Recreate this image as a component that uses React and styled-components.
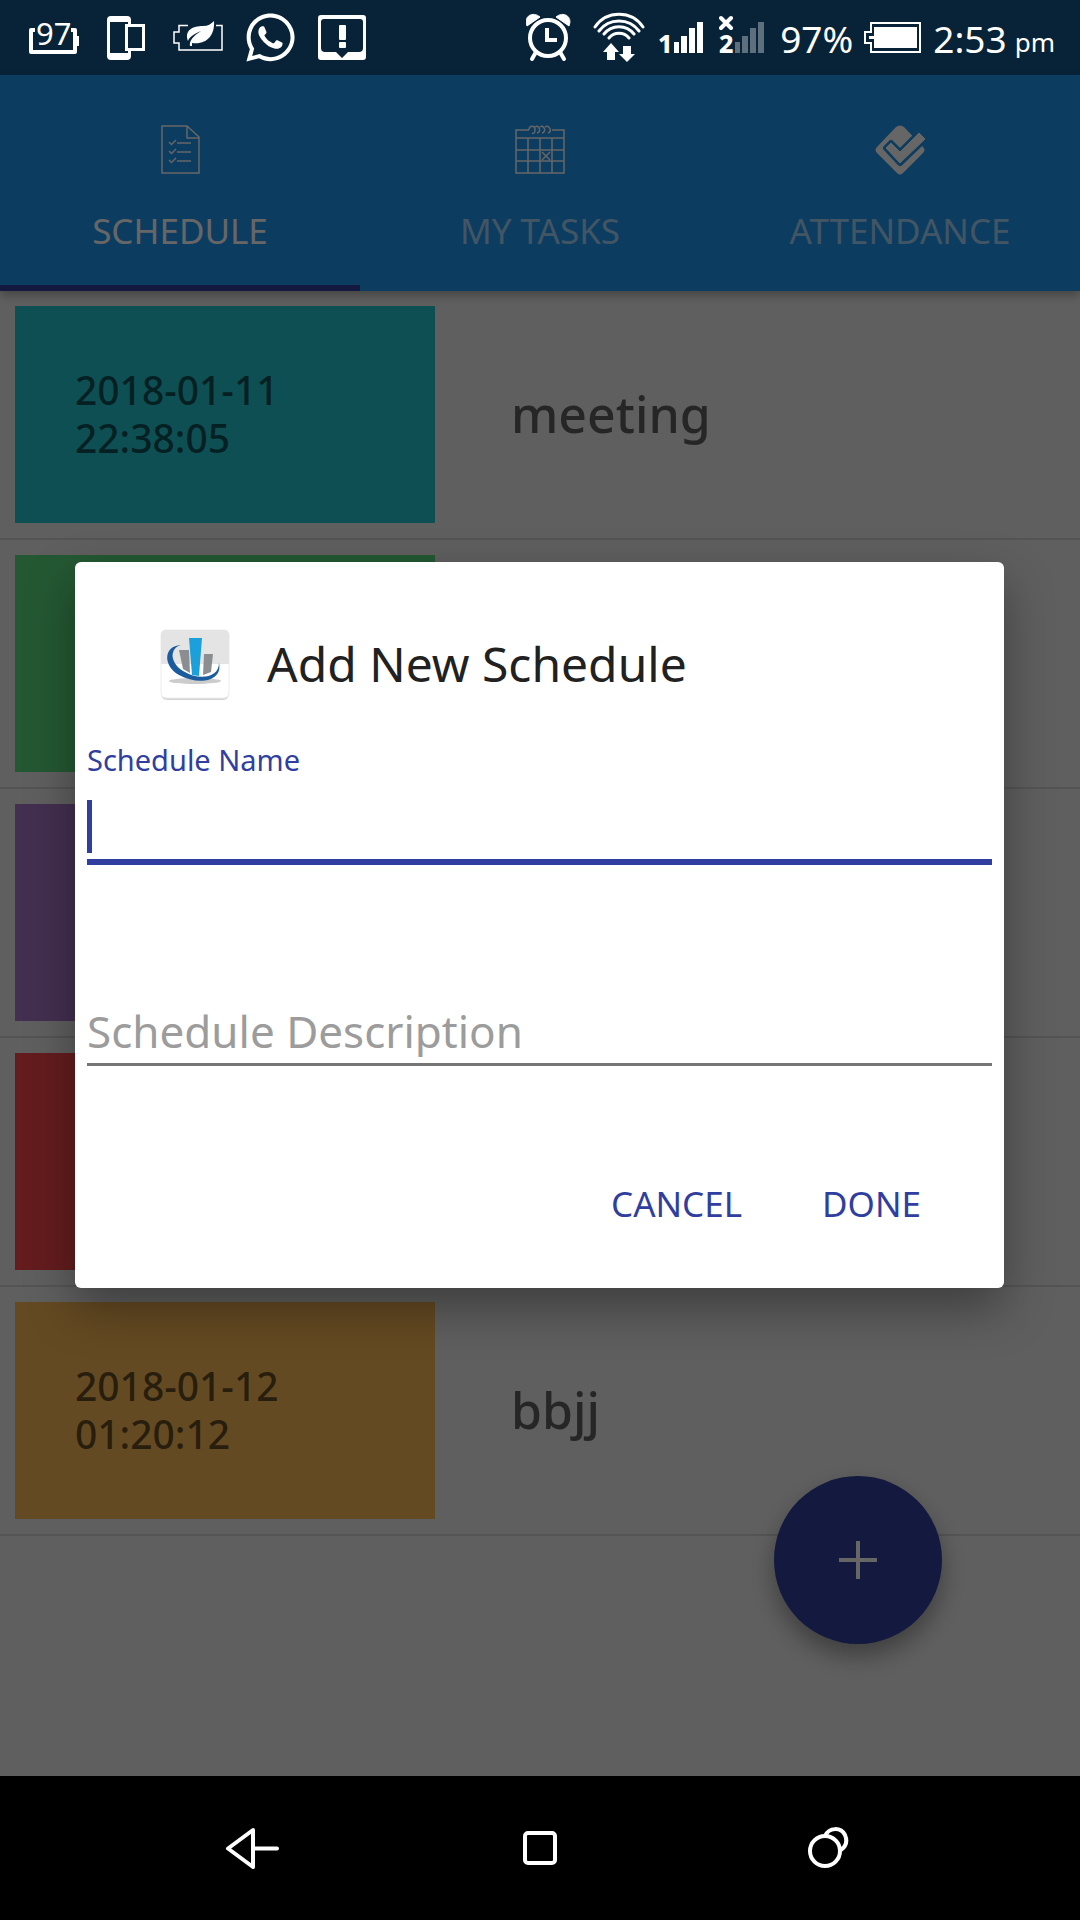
import React, { useState } from 'react';
import styled, { createGlobalStyle } from 'styled-components';
import { FaWhatsapp } from 'react-icons/fa';

const GlobalStyle = createGlobalStyle`
  * {
    box-sizing: border-box;
  }
  body {
    margin: 0;
    background: #000;
    font-family: 'Noto Sans', 'Open Sans', sans-serif;
  }
  button,
  input {
    font-family: inherit;
  }
`;

const Screen = styled.div`
  min-height: 100vh;
  display: flex;
  flex-direction: column;
`;

const StatusBar = styled.header`
  height: 75px;
  display: flex;
  justify-content: space-between;
  padding: 0 25px 0 18px;
  background: #082338;
  color: #fff;
`;

const Notifications = styled.div`
  display: flex;
  align-items: center;
`;

const Notification = styled.span`
  width: 72px;
  display: flex;
  justify-content: center;
`;

const SystemInfo = styled.div`
  display: flex;
  gap: 11px;
`;

const Clock = styled.div`
  display: flex;
  gap: 8px;
`;

const StatusText = styled.span`
  font-size: ${(props) => (props.$small ? '26px' : '37px')};
  line-height: ${(props) => (props.$small ? '84px' : '78px')};
`;

const Content = styled.main`
  position: relative;
  flex: 1;
  display: flex;
  flex-direction: column;
  background: #eee;
`;

const TabBar = styled.nav`
  display: grid;
  grid-template-columns: repeat(3, 1fr);
  height: 216px;
  background: #1e96f0;
  box-shadow: 0 4px 10px rgba(0, 0, 0, 0.3);
`;

const Tab = styled.button`
  display: flex;
  flex-direction: column;
  align-items: center;
  gap: 27px;
  padding: 45px 0 0;
  border: none;
  border-bottom: 6px solid ${(props) => (props.$active ? '#303f9f' : 'transparent')};
  background: none;
  color: #fff;
`;

const TabLabel = styled.span`
  font-size: 35px;
  line-height: 48px;
  opacity: ${(props) => (props.$active ? 1 : 0.6)};
`;

const List = styled.ul`
  margin: 0;
  padding: 0;
  list-style: none;
`;

const Row = styled.li`
  display: flex;
  align-items: center;
  padding: 15px;
  border-bottom: 2px solid #d2d2d2;
`;

const DateCard = styled.div`
  width: 40%;
  height: 217px;
  display: flex;
  flex-direction: column;
  justify-content: center;
  padding: 0 0 2px 60px;
  background: ${(props) => props.$color};
  color: rgba(0, 0, 0, 0.6);
  font-size: 39px;
  font-weight: 500;
  line-height: 48px;
`;

const RowTitle = styled.span`
  padding: 0 0 2px 76px;
  color: rgba(0, 0, 0, 0.6);
  font-size: 50px;
  font-weight: 500;
`;

const AddButton = styled.button`
  position: absolute;
  right: 138px;
  bottom: 132px;
  width: 168px;
  height: 168px;
  display: flex;
  align-items: center;
  justify-content: center;
  padding: 0;
  border: none;
  border-radius: 50%;
  background: #303f9f;
  color: #fff;
  box-shadow: 0 12px 24px rgba(0, 0, 0, 0.35);
`;

const Overlay = styled.div`
  position: absolute;
  inset: 0;
  display: flex;
  align-items: center;
  justify-content: center;
  padding: 0 76px 1px 75px;
  background: rgba(0, 0, 0, 0.6);
`;

const Dialog = styled.form`
  width: 100%;
  padding: 66px 12px 36px;
  border-radius: 6px;
  background: #fff;
  box-shadow: 0 20px 48px rgba(0, 0, 0, 0.35);
`;

const DialogHeader = styled.div`
  display: flex;
  align-items: center;
  gap: 36px;
  padding-left: 72px;
  margin-bottom: 40px;
`;

const DialogTitle = styled.h1`
  margin: 0;
  color: #212121;
  font-size: 48px;
  font-weight: 400;
  line-height: 70px;
`;

const FieldLabel = styled.label`
  display: block;
  color: #303f9f;
  font-size: 29px;
  line-height: 40px;
`;

const InputLine = styled.div`
  height: ${(props) => (props.$focused ? '85px' : '82px')};
  display: flex;
  align-items: flex-end;
  padding-bottom: 6px;
  border-bottom: ${(props) => (props.$focused ? '6px solid #303f9f' : '3px solid #757575')};
`;

const Caret = styled.span`
  width: 5px;
  height: 53px;
  background: #303f9f;
`;

const Input = styled.input`
  flex: 1;
  min-width: 0;
  height: 53px;
  padding: 0;
  border: none;
  outline: none;
  background: none;
  color: #212121;
  font-size: 44px;
  &::placeholder {
    color: #9c9c9c;
    opacity: 1;
  }
`;

const Field = styled.div`
  margin-bottom: ${(props) => (props.$last ? '89px' : '119px')};
`;

const Actions = styled.div`
  display: flex;
  justify-content: flex-end;
  gap: 34px;
  padding: 0 48px 1px 0;
`;

const ActionButton = styled.button`
  height: 96px;
  padding: 0 23px;
  border: none;
  background: none;
  color: #303f9f;
  font-size: 35px;
`;

const NavBar = styled.footer`
  display: grid;
  grid-template-columns: repeat(3, 1fr);
  height: 144px;
  padding: 0 10%;
  background: #000;
`;

const NavButton = styled.button`
  display: flex;
  align-items: center;
  justify-content: center;
  padding: 0;
  border: none;
  background: none;
  color: #fff;
`;

const BatteryLevelIcon = () => (
  <svg width="50" height="75" viewBox="0 0 50 75" fill="none" stroke="currentColor">
    <path d="M6 30H2V52H46V30H42" strokeWidth="4" strokeLinejoin="round" />
    <path d="M48 36V46" strokeWidth="4" />
    <text x="7" y="45" fontSize="31" fill="currentColor" stroke="none">97</text>
  </svg>
);

const DevicesIcon = () => (
  <svg width="38" height="75" viewBox="0 0 38 75" fill="currentColor">
    <path fillRule="evenodd" d="M4 16H20Q24 16 24 20V24H38V51H24V56Q24 60 20 60H4Q0 60 0 56V20Q0 16 4 16ZM3 22V53H21V51H18V24H21V22ZM21 27V48H35V27Z" />
  </svg>
);

const BatterySaverIcon = () => (
  <svg width="50" height="75" viewBox="0 0 50 75">
    <path d="M15 25.500H6V32H1V43H6V50H49V25.500H43" fill="none" stroke="currentColor" strokeWidth="1.500" />
    <path d="M41 21C42 35 34 45 19 43L19 46L17 46C16 41 20 36 28 31C20 34 16 38 15 41C11 30 20 26 30 26C35 26 38 24 41 21Z" fill="currentColor" />
  </svg>
);

const AlertIcon = () => (
  <svg width="48" height="75" viewBox="0 0 48 75" fill="currentColor">
    <path fillRule="evenodd" d="M3 15H45Q48 15 48 18V57Q48 60 45 60H3Q0 60 0 57V18Q0 15 3 15ZM6 19Q3 19 3 22V48Q3 52 7 52H18L24 58L30 52H41Q45 52 45 48V22Q45 19 42 19Z" />
    <rect x="21" y="25" width="7" height="15" rx="1" />
    <rect x="21" y="42" width="7" height="6" rx="1" />
  </svg>
);

const AlarmIcon = () => (
  <svg width="56" height="75" viewBox="0 0 56 75" fill="none" stroke="currentColor" strokeWidth="4">
    <circle cx="22" cy="38" r="18" />
    <path d="M21 28V40H31" />
    <path d="M10 52L6 59M34 52L38 59" strokeLinecap="round" />
    <path d="M1 26C-3 16 7 11 14 17ZM43 26C47 16 37 11 30 17Z" fill="currentColor" stroke="currentColor" strokeWidth="1" />
  </svg>
);

const WifiIcon = () => (
  <svg width="54" height="75" viewBox="0 0 54 75" fill="none" stroke="currentColor" strokeWidth="3" strokeLinecap="round">
    <path d="M2 27A29 29 0 0 1 50 27M6 31A25 25 0 0 1 46 31M11 34A19 19 0 0 1 41 34M16 38A13 13 0 0 1 36 38" />
    <path d="M18 43L26 52H22V60H14V52H10ZM34 62L42 54H38V46H30V54H26Z" fill="currentColor" stroke="none" />
  </svg>
);

const SignalIcon = ({ sim, off }) => (
  <svg width="50" height="75" viewBox="0 0 50 75" fill="currentColor">
    {off && <path d="M2 18L12 28M12 18L2 28" stroke="currentColor" strokeWidth="4" strokeLinecap="round" />}
    <text x="0" y="53" fontSize="25" fontWeight="800">{sim}</text>
    <path opacity={off ? 0.35 : 1} d="M16 42H21V53H16ZM23 36H29V53H23ZM31 28H37V53H31ZM39 22H45V53H39Z" />
  </svg>
);

const BatteryIcon = () => (
  <svg width="58" height="75" viewBox="0 0 58 75">
    <path d="M7 23H56V52H7V43H1V32H7Z" fill="none" stroke="currentColor" strokeWidth="2" />
    <path d="M10 27H53V48H10V39H5V36H10Z" fill="currentColor" />
  </svg>
);

const ScheduleIcon = () => (
  <svg width="60" height="60" viewBox="0 0 60 60" fill="none" stroke="currentColor" strokeWidth="1.500">
    <path d="M12 6H37L49 17V53H12ZM37 6V18H49" />
    <path d="M27 23H41M27 32H41M27 41H41" />
    <path d="M19 22L21.500 24.500L26 20M19 31L21.500 33.500L26 29M19 40L21.500 42.500L26 38" />
  </svg>
);

const TasksIcon = () => (
  <svg width="60" height="60" viewBox="0 0 60 60" fill="none" stroke="currentColor" strokeWidth="1.500">
    <path d="M19 10H6V53H54V10H42M6 18H54M6 30H54M6 41H54M18 18V53M30 18V53M42 18V53" />
    <path d="M32 32L40 40M40 32L32 40" />
    <path d="M19 10C19 5 25 5 25 10C25 13 23 14 22 13M25 7C29 4 32 12 27 13M30 7C34 4 37 12 32 13M35 7C39 4 43 12 38 13" />
  </svg>
);

const AttendanceIcon = () => (
  <svg width="60" height="60" viewBox="0 0 60 60" fill="currentColor">
    <path d="M26 7Q30 4 34 7L53 27Q56 30 53 33L33 53Q30 56 27 53L7 33Q4 30 7 27Z" />
    <path d="M16 28L21 23L30 32L49 13L55 19L30 43Z" stroke="#1e96f0" strokeWidth="6" strokeLinejoin="round" />
    <path d="M42 15L49 8L60 18L55 23Z" fill="#1e96f0" />
    <path d="M16 28L21 23L30 32L49 13L55 19L30 43Z" stroke="currentColor" strokeWidth="1" strokeLinejoin="round" />
  </svg>
);

const LogoIcon = () => (
  <svg width="72" height="72" viewBox="0 0 72 72">
    <rect x="2" y="3" width="68" height="69" rx="6" fill="#d4d4d4" />
    <rect x="2" y="2" width="68" height="68" rx="5" fill="#fff" stroke="#ececec" />
    <path d="M2 36V7Q2 2 7 2H65Q70 2 70 7V36Z" fill="#e4e4e4" />
    <ellipse cx="36" cy="53" rx="26" ry="3" fill="#ccc" />
    <path d="M20 22H30L31 45L24 41Z" fill="#8b8d90" />
    <path d="M45 26H54L52 44L44 47Z" fill="#8b8d90" />
    <path d="M30 10H43L40 48L33 47Z" fill="#1ba0dc" />
    <path d="M22 17C4 18 4 38 20 47C40 58 64 53 60 35C60 50 40 53 24 43C10 34 11 20 22 17Z" fill="#1b5c9e" />
  </svg>
);

const PlusIcon = () => (
  <svg width="40" height="40" viewBox="0 0 40 40" stroke="currentColor" strokeWidth="4">
    <path d="M20 1V39M1 20H39" />
  </svg>
);

const BackIcon = () => (
  <svg width="56" height="48" viewBox="0 0 56 48" fill="none" stroke="currentColor" strokeWidth="4" strokeLinecap="round" strokeLinejoin="round">
    <path d="M29 6L4 24.500L29 43ZM29 24.500H53" />
  </svg>
);

const HomeIcon = () => (
  <svg width="34" height="34" viewBox="0 0 34 34" fill="none" stroke="currentColor" strokeWidth="4">
    <rect x="2" y="2" width="30" height="30" rx="3" />
  </svg>
);

const RecentIcon = () => (
  <svg width="42" height="42" viewBox="0 0 42 42" fill="none" stroke="currentColor" strokeWidth="4">
    <circle cx="18" cy="24" r="15" />
    <path d="M18 9C22 0 34 0 38 8C41 15 38 20 34 23" />
  </svg>
);

const tabs = [
  { label: 'SCHEDULE', Icon: ScheduleIcon },
  { label: 'MY TASKS', Icon: TasksIcon },
  { label: 'ATTENDANCE', Icon: AttendanceIcon },
];

const schedules = [
  { color: '#24c6d2', date: '2018-01-11', time: '22:38:05', title: 'meeting' },
  { color: '#5adc80' },
  { color: '#a876c8' },
  { color: '#fa464b' },
  { color: '#fab955', date: '2018-01-12', time: '01:20:12', title: 'bbjj' },
];

const App = () => {
  const [activeTab, setActiveTab] = useState('SCHEDULE');
  const [name, setName] = useState('');
  const [description, setDescription] = useState('');

  const handleSubmit = (e) => {
    e.preventDefault();
    setName('');
    setDescription('');
  };

  return (
    <Screen>
      <GlobalStyle />
      <StatusBar>
        <Notifications>
          <Notification><BatteryLevelIcon /></Notification>
          <Notification><DevicesIcon /></Notification>
          <Notification><BatterySaverIcon /></Notification>
          <Notification><FaWhatsapp size={55} /></Notification>
          <Notification><AlertIcon /></Notification>
        </Notifications>
        <SystemInfo>
          <AlarmIcon />
          <WifiIcon />
          <SignalIcon sim="1" />
          <SignalIcon sim="2" off />
          <StatusText>97%</StatusText>
          <BatteryIcon />
          <Clock>
            <StatusText>2:53</StatusText>
            <StatusText $small>pm</StatusText>
          </Clock>
        </SystemInfo>
      </StatusBar>

      <Content>
        <TabBar>
          {tabs.map(({ label, Icon }) => (
            <Tab key={label} type="button" $active={label === activeTab} onClick={() => setActiveTab(label)}>
              <Icon />
              <TabLabel $active={label === activeTab}>{label}</TabLabel>
            </Tab>
          ))}
        </TabBar>
        <List>
          {schedules.map((item) => (
            <Row key={item.color}>
              <DateCard $color={item.color}>
                <span>{item.date}</span>
                <span>{item.time}</span>
              </DateCard>
              <RowTitle>{item.title}</RowTitle>
            </Row>
          ))}
        </List>
        <AddButton type="button" aria-label="Add">
          <PlusIcon />
        </AddButton>

        <Overlay>
          <Dialog onSubmit={handleSubmit}>
            <DialogHeader>
              <LogoIcon />
              <DialogTitle>Add New Schedule</DialogTitle>
            </DialogHeader>
            <Field>
              <FieldLabel htmlFor="name">Schedule Name</FieldLabel>
              <InputLine $focused>
                <Caret />
                <Input
                  type="text"
                  id="name"
                  value={name}
                  onChange={(e) => setName(e.target.value)}
                />
              </InputLine>
            </Field>
            <Field $last>
              <InputLine>
                <Input
                  type="text"
                  id="description"
                  aria-label="Schedule Description"
                  placeholder="Schedule Description"
                  value={description}
                  onChange={(e) => setDescription(e.target.value)}
                />
              </InputLine>
            </Field>
            <Actions>
              <ActionButton type="button">CANCEL</ActionButton>
              <ActionButton type="submit">DONE</ActionButton>
            </Actions>
          </Dialog>
        </Overlay>
      </Content>

      <NavBar>
        <NavButton type="button" aria-label="Back"><BackIcon /></NavButton>
        <NavButton type="button" aria-label="Home"><HomeIcon /></NavButton>
        <NavButton type="button" aria-label="Recent apps"><RecentIcon /></NavButton>
      </NavBar>
    </Screen>
  );
};

export default App;
